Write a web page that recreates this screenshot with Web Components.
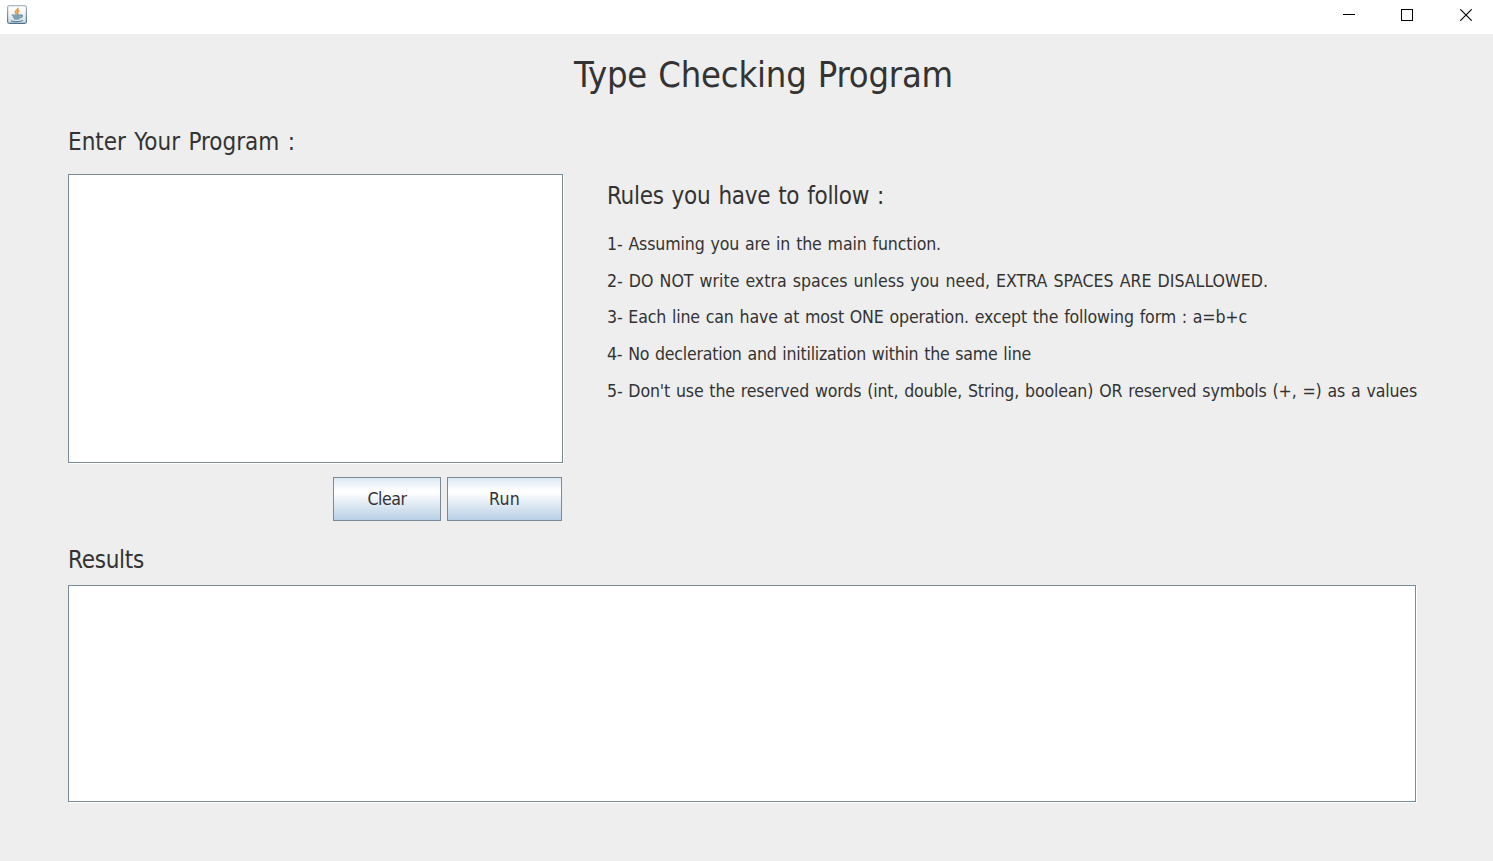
<!DOCTYPE html>
<html lang="en">
<head>
<meta charset="utf-8">
<title>Type Checking Program</title>
<style>
html,body{margin:0;height:100%;overflow:hidden;background:#eee}
body{font-family:Tahoma,"DejaVu Sans Condensed","DejaVu Sans",sans-serif;font-stretch:condensed;color:#333}
</style>
</head>
<body>
<checker-window></checker-window>
<script>
// Text label; "span" sets the advance width the text is tracked to.
class SwingLabel extends HTMLElement {
  connectedCallback() {
    const root = this.attachShadow({mode: 'open'});
    root.innerHTML = `<style>
      :host{display:block;white-space:nowrap;font-size:24px;line-height:30px;word-spacing:1.5px}
      :host([kind=title]){font-size:36px;line-height:44px;word-spacing:1px}
      :host([kind=rule]){font-size:17.6px;line-height:36.7px;word-spacing:1px}
      :host([kind=button]){font-size:17.6px;line-height:43px}
      span{display:inline-block}
    </style><span><slot></slot></span>`;
    const text = root.querySelector('span');
    const target = Number(this.getAttribute('span'));
    if (target) {
      const gap = (target - text.getBoundingClientRect().width) / this.textContent.length;
      text.style.letterSpacing = gap + 'px';
    }
  }
}
customElements.define('swing-label', SwingLabel);

class SwingButton extends HTMLElement {
  connectedCallback() {
    this.attachShadow({mode: 'open'}).innerHTML = `<style>
      :host{display:flex;justify-content:center;box-sizing:border-box;height:44px;border:1px solid #7a8a99;
        background:linear-gradient(#dde8f3 0,#fff 30%,#fff 34%,#b8cfe5 100%)}
    </style><slot></slot>`;
  }
}
customElements.define('swing-button', SwingButton);

class SwingArea extends HTMLElement {
  connectedCallback() {
    this.attachShadow({mode: 'open'}).innerHTML = `<style>
      :host{display:block;box-sizing:border-box;border:1px solid #7a8a99;background:#fff;box-shadow:1px 1px 0 #fff}
    </style>`;
  }
}
customElements.define('swing-area', SwingArea);

class TitleBar extends HTMLElement {
  connectedCallback() {
    this.attachShadow({mode: 'open'}).innerHTML = `<style>
      :host{display:flex;justify-content:space-between;height:34px;background:#fff}
      .app{margin:4px 0 0 6px}
      .controls{display:flex;gap:46px;padding:9px 20px 0 0}
      svg{display:block}
    </style>
    <svg class="app" width="22" height="22" viewBox="0 0 22 22">
      <defs><linearGradient id="g" x2="0" y2="1"><stop stop-color="#fff"/><stop offset=".5" stop-color="#f1f3f5"/><stop offset="1" stop-color="#cfd9e2"/></linearGradient>
      <linearGradient id="b" x2="0" y2="1"><stop stop-color="#a9b8c5"/><stop offset="1" stop-color="#4f7189"/></linearGradient></defs>
      <rect x="1.6" y="1.6" width="18.8" height="17.8" rx="1.8" fill="url(#g)" stroke="url(#b)" stroke-width="1.2"/>
      <path d="M11.8 3.800c1.300 2-3.200 2.700-2.300 4.600.3.700.9 1.100.9 1.800M13.300 6.200c-2.300 1.300-2 2.100-1.500 2.900.4.700 0 1.200-.6 1.600" fill="none" stroke="#ee9238" stroke-width="1.600"/>
      <path d="M5.800 11.100h9.200M6.800 13h7.500M8 14.800h5.600M14.500 11.200c2.300-.7 2.500 1.700-.3 2.400M5 16.800c3 1 8.500 1 12-.3" fill="none" stroke="#5e86a1" stroke-width="1.300"/>
    </svg>
    <div class="controls">
      <svg width="12" height="12"><path d="M0 5.500h12" stroke="#000"/></svg>
      <svg width="12" height="12"><rect x=".5" y=".5" width="11" height="11" fill="none" stroke="#000"/></svg>
      <svg width="13" height="12" style="margin-left:1px"><path d="M.3.3 11.700 11.700M11.700.3.3 11.700" stroke="#000" stroke-width="1.100"/></svg>
    </div>`;
  }
}
customElements.define('title-bar', TitleBar);

class CheckerWindow extends HTMLElement {
  connectedCallback() {
    this.attachShadow({mode: 'open'}).innerHTML = `<style>
      :host{display:block;height:861px;background:#eee}
      .heading{padding:19px 0 0 574px;height:74px;box-sizing:content-box}
      .main{display:grid;grid-template-columns:495px 1fr;column-gap:44px;padding-left:68px}
      .program{width:495px;height:289px;margin-top:17px}
      .buttons{display:flex;justify-content:flex-end;gap:6px;margin:14px 1px 0 0}
      .clear{width:108px}.run{width:115px}
      .rules{padding-top:54px}
      .list{margin-top:15px}
      .results{padding:24px 0 0 68px}
      .output{width:1348px;height:217px;margin-top:10px}
    </style>
    <title-bar></title-bar>
    <div class="heading"><swing-label kind="title" span="379">Type Checking Program</swing-label></div>
    <div class="main">
      <section>
        <swing-label span="227">Enter Your Program :</swing-label>
        <swing-area class="program"></swing-area>
        <div class="buttons">
          <swing-button class="clear"><swing-label kind="button" span="39">Clear</swing-label></swing-button>
          <swing-button class="run"><swing-label kind="button" span="31">Run</swing-label></swing-button>
        </div>
      </section>
      <section class="rules">
        <swing-label span="277">Rules you have to follow :</swing-label>
        <div class="list">
          <swing-label kind="rule" span="334">1- Assuming you are in the main function.</swing-label>
          <swing-label kind="rule" span="661">2- DO NOT write extra spaces unless you need, EXTRA SPACES ARE DISALLOWED.</swing-label>
          <swing-label kind="rule" span="640">3- Each line can have at most ONE operation. except the following form : a=b+c</swing-label>
          <swing-label kind="rule" span="424">4- No decleration and initilization within the same line</swing-label>
          <swing-label kind="rule" span="810">5- Don't use the reserved words (int, double, String, boolean) OR reserved symbols (+, =) as a values</swing-label>
        </div>
      </section>
    </div>
    <section class="results">
      <swing-label span="76">Results</swing-label>
      <swing-area class="output"></swing-area>
    </section>`;
  }
}
customElements.define('checker-window', CheckerWindow);
</script>
</body>
</html>
